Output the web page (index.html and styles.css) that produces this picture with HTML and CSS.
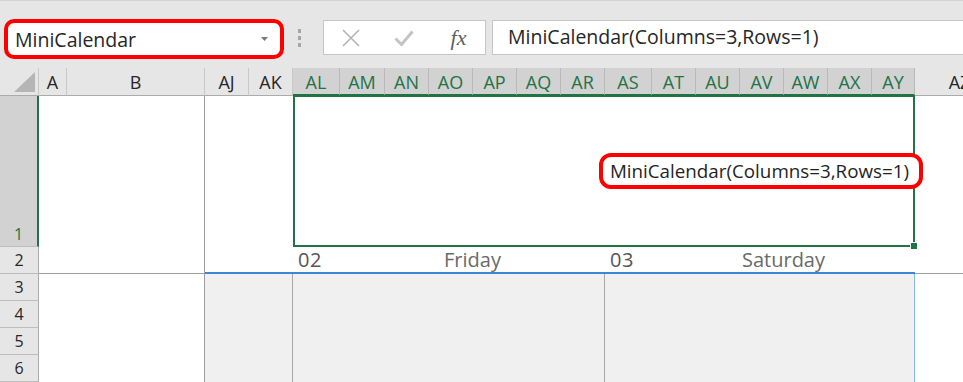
FILE: index.html
```html
<!DOCTYPE html>
<html lang="en">

<head>
    <title>MiniCalendar</title>
    <link rel="stylesheet" href="styles.css">
</head>

<body>
    <div class="toolbar">
        <div class="namebox">
            <span class="namebox-text">MiniCalendar</span>
            <svg class="caret" width="7" height="4" viewBox="0 0 7 4"><path d="M0 0h7L3.5 4z" fill="#7a7a7a"/></svg>
        </div>
        <div class="grip"><i></i><i></i><i></i></div>
        <div class="fxbox">
            <span class="fxbtn">
                <svg width="18" height="18" viewBox="0 0 18 18"><path d="M1 1l16 16M17 1L1 17" stroke="#b4b4b4" stroke-width="1.6" fill="none"/></svg>
            </span>
            <span class="fxbtn">
                <svg width="20" height="16" viewBox="0 0 20 16"><path d="M1.5 8.5l6 6L18.5 1.5" stroke="#c4c4c4" stroke-width="3" fill="none"/></svg>
            </span>
            <span class="fxbtn fx">fx</span>
        </div>
        <div class="formula">MiniCalendar(Columns=3,Rows=1)</div>
    </div>

    <div class="sheet">
        <div class="corner"><span class="tri"></span></div>
        <div class="ch">A</div>
        <div class="ch">B</div>
        <div class="ch">AJ</div>
        <div class="ch">AK</div>
        <div class="ch sel">AL</div>
        <div class="ch sel">AM</div>
        <div class="ch sel">AN</div>
        <div class="ch sel">AO</div>
        <div class="ch sel">AP</div>
        <div class="ch sel">AQ</div>
        <div class="ch sel">AR</div>
        <div class="ch sel">AS</div>
        <div class="ch sel">AT</div>
        <div class="ch sel">AU</div>
        <div class="ch sel">AV</div>
        <div class="ch sel">AW</div>
        <div class="ch sel">AX</div>
        <div class="ch sel">AY</div>
        <div class="ch">AZ</div>

        <div class="rh sel r1">1</div>
        <div class="rh r2">2</div>
        <div class="rh r3">3</div>
        <div class="rh r4">4</div>
        <div class="rh r5">5</div>
        <div class="rh r6">6</div>

        <div class="frozen-top"></div>
        <div class="selection">
            <span class="tag">MiniCalendar(Columns=3,Rows=1)</span>
            <span class="handle"></span>
        </div>
        <div class="edge-top"></div>

        <div class="day lead"></div>
        <div class="day num c-al">02</div>
        <div class="day name c-am">Friday</div>
        <div class="day num c-as">03</div>
        <div class="day name c-at">Saturday</div>

        <div class="frozen-bottom"></div>
        <div class="fill c-aj"></div>
        <div class="fill c-al"></div>
        <div class="fill c-as last"></div>
    </div>
</body>

</html>
```

FILE: styles.css
```css
body {
    margin: 0;
    width: 963px;
    height: 382px;
    overflow: hidden;
    background: #fff;
    font-family: "Open Sans", sans-serif;
    color: #262626;
}

/* formula bar */

.toolbar {
    display: flex;
    align-items: flex-start;
    height: 70px;
    box-sizing: border-box;
    margin-top: -2px;
    padding-top: 19px;
    background: #e6e6e6;
    border-top: 2px solid #f2f2f2;
    box-shadow: inset 0 1px 0 #d4d4d4;
}

.namebox {
    display: flex;
    align-items: center;
    justify-content: space-between;
    margin-left: 4px;
    width: 280px;
    height: 40px;
    box-sizing: border-box;
    border: 4px solid #f00;
    border-radius: 10px;
    background: #fff;
    padding: 0 12px 0 7px;
    font-size: 19.5px;
}

.caret {
    display: block;
}

.grip {
    display: flex;
    flex-direction: column;
    gap: 3px;
    margin: 10px 0 0 14px;

    & i {
        display: block;
        width: 3px;
        height: 4px;
        background: #a6a6a6;
    }
}

.fxbox {
    display: flex;
    margin: 1px 0 0 22px;
    width: 163px;
    height: 35px;
    box-sizing: border-box;
    border: 1px solid #c6c6c6;
    background: #fff;
}

.fxbtn {
    flex: 1;
    display: flex;
    align-items: center;
    justify-content: center;
}

.fx {
    font-family: "Liberation Serif", serif;
    font-style: italic;
    font-size: 22px;
    color: #5e5e5e;
    padding-left: 2px;
}

.formula {
    flex: 1;
    margin: 1px 0 0 6px;
    height: 35px;
    box-sizing: border-box;
    border: 1px solid #c6c6c6;
    border-right: none;
    background: #fff;
    padding-left: 15px;
    font-size: 19.5px;
    line-height: 32px;
}

/* grid */

.sheet {
    display: grid;
    grid-template-columns: 39px 28px 138px 44px 44px 47px 45px 44px 44px 44px 44px 44px 47px 44px 44px 44px 44px 44px 43px 90px;
    grid-template-rows: 28px 151px 27px 27px 27px 27px 27px;
    width: 1005px;
}

.corner {
    display: flex;
    justify-content: flex-end;
    align-items: flex-end;
    padding: 0 3px 3px 0;
    background: #e6e6e6;
    border-right: 1px solid #c8c8c8;
    border-bottom: 1px solid #ababab;

    & .tri {
        width: 0;
        height: 0;
        border-left: 21px solid transparent;
        border-bottom: 20px solid #b5b5b5;
    }
}

.ch {
    display: flex;
    align-items: center;
    justify-content: center;
    background: #e6e6e6;
    border-right: 1px solid #c8c8c8;
    border-bottom: 1px solid #ababab;
    font-size: 18px;
    padding-top: 1px;
}

.ch.sel {
    background: #d2d2d2;
    color: #217346;
    border-right-color: #b9b9b9;
    border-bottom: 2px solid #217346;
}

.rh {
    grid-column: 1;
    display: flex;
    align-items: center;
    justify-content: center;
    background: #e6e6e6;
    border-right: 1px solid #ababab;
    border-bottom: 1px solid #bdbdbd;
    font-size: 16px;
}

.rh.sel {
    align-items: flex-end;
    padding-bottom: 1px;
    background: #d2d2d2;
    color: #217346;
    border-right: 2px solid #217346;
}

.r1 { grid-row: 2; }
.r2 { grid-row: 3; }
.r3 { grid-row: 4; }
.r4 { grid-row: 5; }
.r5 { grid-row: 6; }
.r6 { grid-row: 7; }

.frozen-top {
    grid-column: 2 / 4;
    grid-row: 2 / 4;
    border-right: 1px solid #9e9e9e;
    border-bottom: 1px solid #9e9e9e;
}

.frozen-bottom {
    grid-column: 2 / 4;
    grid-row: 4 / 8;
    border-right: 1px solid #9e9e9e;
}

.edge-top {
    grid-column: 20;
    grid-row: 2 / 4;
    border-bottom: 1px solid #9e9e9e;
}

.selection {
    position: relative;
    grid-column: 6 / 20;
    grid-row: 2;
    display: flex;
    align-items: center;
    justify-content: flex-end;
    margin-top: -1px;
    border: 2px solid #217346;
}

.tag {
    margin-right: -10px;
    padding: 2px 10px 2px 7px;
    border: 4px solid #f00;
    border-radius: 12px;
    background: #fff;
    font-size: 18.8px;
    line-height: 24px;
    color: #1f1f1f;
}

.handle {
    position: absolute;
    right: -5px;
    bottom: -5px;
    width: 6px;
    height: 6px;
    background: #217346;
    border: 1px solid #fff;
}

.day {
    grid-row: 3;
    border-bottom: 2px solid #3a86d8;
    font-size: 20px;
    line-height: 26px;
    color: #5f5f5f;
    white-space: nowrap;
}

.day.lead { grid-column: 4 / 6; }

.num {
    padding-left: 5px;
    color: #555;
    letter-spacing: 0.5px;
}

.name {
    text-align: center;
    color: #6a6a6a;
}

.c-al.num { grid-column: 6; }
.c-am { grid-column: 7 / 13; }
.c-as.num { grid-column: 13; }
.c-at { grid-column: 14 / 20; }

.fill {
    grid-row: 4 / 8;
    background: #f0f0f0;
    border-right: 1px solid #a6a6a6;
}

.fill.c-aj { grid-column: 4 / 6; }
.fill.c-al { grid-column: 6 / 13; }
.fill.c-as { grid-column: 13 / 20; }

.fill.last {
    border-right-color: #8ab8ec;
}
```
